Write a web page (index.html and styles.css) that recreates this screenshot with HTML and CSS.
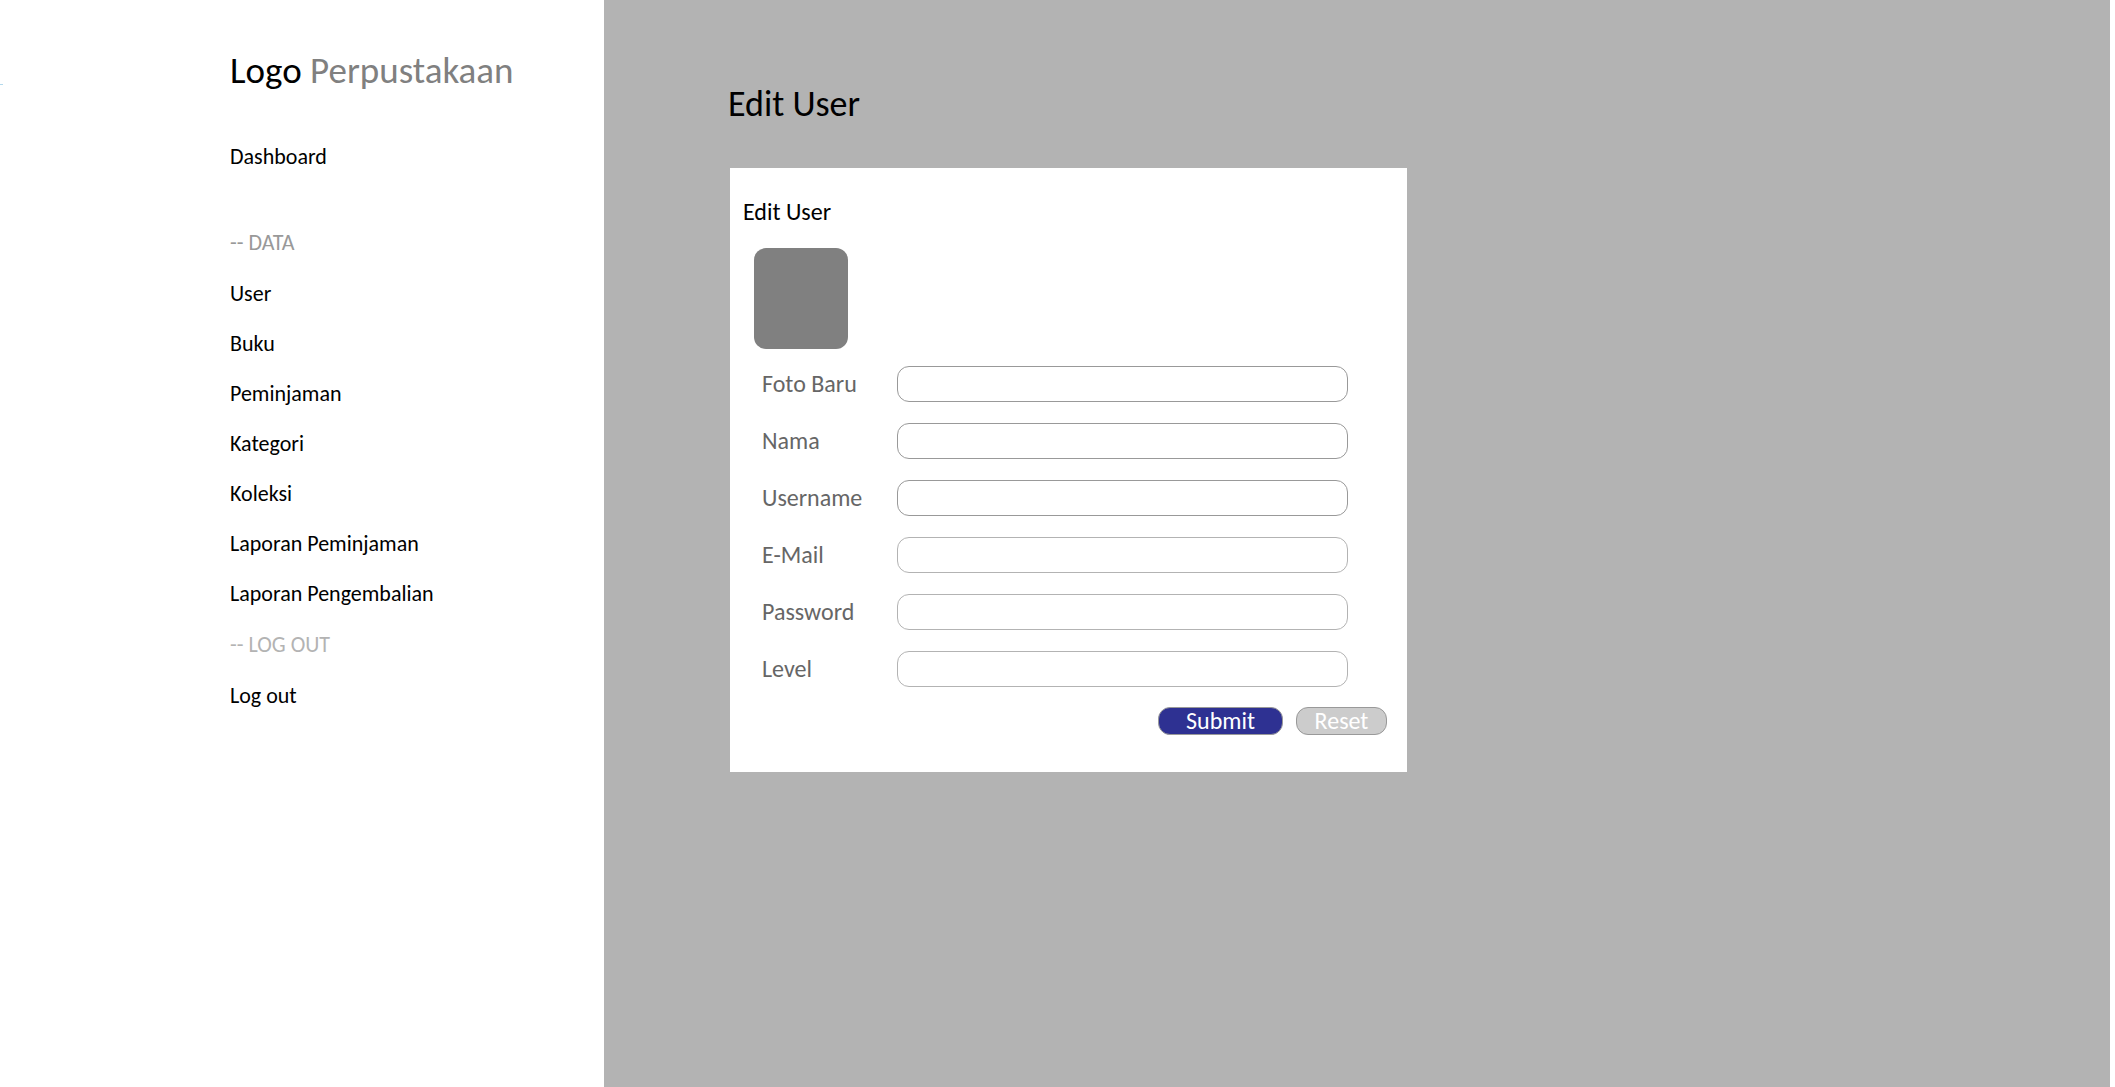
FILE: index.html
```html
<!DOCTYPE html>
<html lang="id">
<head>
<meta charset="utf-8">
<title>Edit User - Perpustakaan</title>
<link rel="stylesheet" href="styles.css">
</head>
<body>
<div class="layout">
  <aside class="sidebar">
    <div class="logo">Logo <span class="logo-sub">Perpustakaan</span></div>
    <nav class="menu">
      <a class="menu-link menu-home" href="#">Dashboard</a>
      <h2 class="menu-title menu-title-data">-- DATA</h2>
      <ul class="menu-list">
        <li><a class="menu-link" href="#">User</a></li>
        <li><a class="menu-link" href="#">Buku</a></li>
        <li><a class="menu-link" href="#">Peminjaman</a></li>
        <li><a class="menu-link" href="#">Kategori</a></li>
        <li><a class="menu-link" href="#">Koleksi</a></li>
        <li><a class="menu-link" href="#">Laporan Peminjaman</a></li>
        <li><a class="menu-link" href="#">Laporan Pengembalian</a></li>
      </ul>
      <h2 class="menu-title menu-title-logout">-- LOG OUT</h2>
      <a class="menu-link" href="#">Log out</a>
    </nav>
  </aside>
  <main class="content">
    <h1 class="page-title">Edit User</h1>
    <form class="card">
      <h2 class="card-title">Edit User</h2>
      <div class="avatar"></div>
      <div class="fields">
        <label class="label" for="foto">Foto Baru</label>
        <input class="input input-dark" id="foto" type="text">
        <label class="label" for="nama">Nama</label>
        <input class="input input-dark" id="nama" type="text">
        <label class="label" for="username">Username</label>
        <input class="input input-dark" id="username" type="text">
        <label class="label" for="email">E-Mail</label>
        <input class="input" id="email" type="email">
        <label class="label" for="password">Password</label>
        <input class="input" id="password" type="password">
        <label class="label" for="level">Level</label>
        <input class="input" id="level" type="text">
      </div>
      <div class="actions">
        <button class="button button-submit" type="submit">Submit</button>
        <button class="button button-reset" type="reset">Reset</button>
      </div>
    </form>
  </main>
</div>
</body>
</html>
```
FILE: styles.css
```css
* {
  box-sizing: border-box;
}

body {
  margin: 0;
  background: #fff;
  color: #000;
  font-family: "Carlito", "Lato", sans-serif;
  font-size: 22px;
  line-height: 24px;
}

h1,
h2,
ul {
  margin: 0;
  padding: 0;
  font-weight: 400;
}

.layout {
  display: grid;
  grid-template-columns: 604px 1fr;
  min-height: 100vh;
  padding-right: 5px;
}

/* Sidebar */

.sidebar {
  position: relative;
  padding: 47px 24px 48px 230px;
}

.sidebar::before {
  content: "";
  position: absolute;
  top: 84px;
  left: 0;
  width: 3px;
  height: 1px;
  background: #b3d9ec;
}

.logo {
  font-size: 37px;
  line-height: 48px;
}

.logo-sub {
  color: #808080;
}

.menu {
  display: flex;
  flex-direction: column;
  padding-top: 37px;
}

.menu-title {
  padding: 13px 0 14px;
  font-size: 22px;
}

.menu-title-data {
  margin-top: 36px;
  color: #999;
}

.menu-title-logout {
  padding-top: 14px;
  color: #b3b3b3;
}

.menu-list {
  list-style: none;
}

.menu-link {
  display: block;
  padding: 13px 0;
  color: #000;
  text-decoration: none;
}

/* Content */

.content {
  padding: 80px 120px 80px 124px;
  background: #b3b3b3;
}

.page-title {
  font-size: 36px;
  line-height: 48px;
}

.card {
  max-width: 677px;
  margin: 40px 0 0 2px;
  padding: 32px 20px 37px 13px;
  background: #fff;
}

.card-title {
  font-size: 24px;
  line-height: 24px;
}

.avatar {
  width: 94px;
  height: 101px;
  margin: 24px 0 0 11px;
  border-radius: 12px;
  background: #808080;
}

.fields {
  display: grid;
  grid-template-columns: 135px 1fr;
  row-gap: 21px;
  align-items: center;
  margin: 17px 39px 0 19px;
}

.label {
  color: #666;
  font-size: 24px;
}

.input {
  width: 100%;
  height: 36px;
  padding: 0 12px;
  border: 1px solid #b3b3b3;
  border-radius: 12px;
  background: #fff;
  font: inherit;
}

.input-dark {
  border-color: #999;
}

.actions {
  display: flex;
  justify-content: flex-end;
  gap: 13px;
  margin-top: 20px;
}

.button {
  height: 28px;
  padding: 0;
  border: 1px solid #999;
  border-radius: 12px;
  color: #fff;
  font: inherit;
  font-size: 24px;
  line-height: 24px;
}

.button-submit {
  width: 125px;
  background: #2e3192;
}

.button-reset {
  width: 91px;
  background: #ccc;
}
```
